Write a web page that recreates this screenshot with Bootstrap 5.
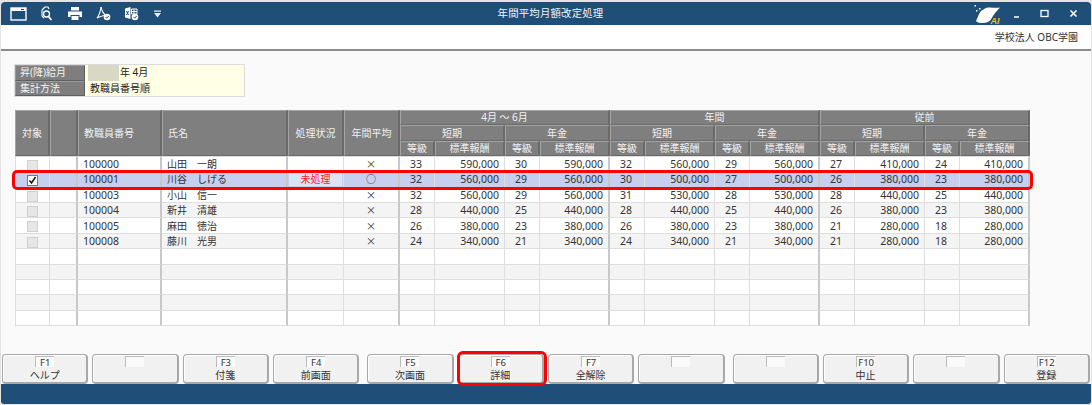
<!DOCTYPE html>
<html lang="ja">
<head>
<meta charset="utf-8">
<title>年間平均月額改定処理</title>
<link href="https://cdn.jsdelivr.net/npm/bootstrap@5.3.0/dist/css/bootstrap.min.css" rel="stylesheet">
<style>
html,body{height:405px;overflow:hidden}
body{background:#e4e4e4;font-family:"Noto Sans","Noto Sans CJK JP",sans-serif;font-size:10px;line-height:1.2;color:#333;padding:2px 1px 0 1px}
.win{height:402px;position:relative;background:#fafafa;border-radius:4px 4px 3px 3px;overflow:hidden}
.titlebar{height:23px;background:#1f4e79;color:#fff;padding-left:9px}
.tb-icons{gap:13px;width:300px}
.tb-title{font-size:10.4px;text-align:center;letter-spacing:.2px;color:#f2f4f7}
.tb-right{width:300px}
.corpbar{height:26px;background:#fff;border-bottom:2px solid #8c8c8c;padding-right:13px;color:#333;font-size:10px}
.cond{margin:13px 0 0 13px;width:231px;border:1px solid #dcdcdc;background:#ffffe6}
.cond-row{height:15.5px}
.cond-lbl{width:70px;background:#7e7e7e;color:#f4f4f4;padding-left:4px;border:1px solid #5f5f5f;border-top-color:#9a9a9a;border-left-color:#9a9a9a;line-height:13px;flex:none}
.cond-year{width:31px;background:#d8d8c4;margin-left:3px;flex:none}
.cond-val{padding-left:1px;line-height:15px;color:#222}
.cond-row+.cond-row .cond-val{padding-left:5px}
.grid-tbl{table-layout:fixed;width:1015px;margin:13px 0 0 14px;border-collapse:separate;border-spacing:0;--bs-table-bg:transparent}
.grid-tbl th{background:#7f7f7f;color:#f2f2f2;font-weight:400;height:15.4px;padding:0;text-align:center;vertical-align:middle;border:1px solid #6a6a6a;border-top-color:#a4a4a4;border-left-color:#a4a4a4;border-right-width:2px;line-height:13px;overflow:hidden}
.grid-tbl th.lft{text-align:left;padding-left:5px}
.grid-tbl td{height:15.4px;padding:0;border-right:1px solid #dedede;border-bottom:1px solid #dedede;line-height:14px;color:#333;overflow:hidden;white-space:nowrap;background:#fff;vertical-align:middle}
.grid-tbl tbody tr:first-child td{border-top:1px solid #dedede}
.grid-tbl tbody tr:nth-child(even) td{background:#f4f4f4}
.grid-tbl tbody tr.sel td{background:#c6d0ee}
.grid-tbl td:first-child{border-left:1px solid #dedede}
.grid-tbl td.v{border-right:2px solid #c8c8c8}
.c-ct{text-align:center}
.c-l{padding-left:5px!important}
.c-g{padding-left:10px!important}
.c-r{text-align:right;padding-right:5px!important}
.num{font-size:10.5px}
.mk{font-family:"Noto Sans CJK JP",sans-serif;font-size:10px;color:#444}
.chk{display:inline-block;width:11px;height:11px;background:#e6e6e6;border:1px solid #d0d0d0;vertical-align:middle}
.chk-on{background:#fff;border-color:#777}
.chk-on svg{display:block}
.st-red{display:block;margin:0 1px;background:#dde2f5;color:#ff1a1a;text-align:center}
.w1{width:35px}.w2{width:28px}.w3{width:84px}.w4{width:126px}.w5{width:56px}.w6{width:35px}.w7{width:70px}
.ftr-keys{position:absolute;left:1px;right:1px;top:352px;height:30px;gap:4px}
.fk{flex:1 1 0;height:30px;background:#f1f1f1;border:1px solid #a8a8a8;border-right-width:2px;border-bottom-width:2px;border-radius:4px;padding:0;color:#333;font-size:10px;line-height:1;box-shadow:inset 1px 1px 0 #fff}
.fk-gap{margin-left:4px}
.fk-no{display:block;width:19px;height:11px;margin-top:1px;font-size:9.5px;line-height:11px;border-top:1px solid #bbb;border-left:1px solid #bbb;background:#fafafa;flex:none}
.fk-lbl{display:block;margin-top:2px;line-height:12px}
.bluefoot{position:absolute;left:0;right:0;top:382px;height:20px;background:#1f4e79}
.mark-a{position:absolute;left:11px;top:168px;width:1021px;height:20px;border:3px solid #f00;border-radius:5px;pointer-events:none}
.mark-b{position:absolute;left:456px;top:349px;width:90px;height:35px;border:3px solid #f00;border-radius:6px;pointer-events:none}
.ic-max{margin-left:19px}
.ic-min{margin-left:11px}
.ic-close{margin-left:20px;margin-right:13px}
</style>
</head>
<body>
<div class="win">
  <div class="titlebar d-flex align-items-center">
    <div class="tb-icons d-flex align-items-center">
      <svg width="17" height="14" viewBox="0 0 17 14"><rect x="1" y="1" width="15" height="12" fill="none" stroke="#fff" stroke-width="1.400"/><rect x="1" y="1" width="15" height="3" fill="#fff"/><path d="M11 2.500h3" stroke="#1f4e79"/></svg>
      <svg width="14" height="15" viewBox="0 0 14 15" fill="none" stroke="#fff"><path d="M5 1h3l1 2M2 4v6l2 2M2 4l3-3" stroke-width="1.100"/><circle cx="6.500" cy="8" r="3" stroke-width="1.300"/><path d="M8.500 10.500l3 3.500" stroke-width="1.700"/></svg>
      <svg width="16" height="15" viewBox="0 0 16 15"><path d="M4 1h8v3.500H4z" fill="#fff"/><path d="M1 5.500h14V11h-2.500V9h-9v2H1z" fill="#fff"/><path d="M4.500 10h7v4h-7z" fill="#fff"/></svg>
      <svg width="15" height="15" viewBox="0 0 15 15" fill="none"><path d="M5 1c-.5 4-1.500 8-4 11 2-1 6-3 8-2.500" stroke="#fff" stroke-width="1.100"/><path d="M5 1c.5 3 2 6 4 8" stroke="#fff" stroke-width="1.100"/><circle cx="11" cy="11" r="3.300" fill="#fff"/><path d="M9.500 11l1.200 1.200 2-2.200" stroke="#1f4e79" fill="none"/></svg>
      <svg width="15" height="15" viewBox="0 0 15 15"><path d="M1 2.500 6.500 1v12L1 11.500z" fill="#fff"/><path d="M2.500 5l2 4M4.500 5l-2 4" stroke="#1f4e79" fill="none"/><path d="M7.500 3H13v5H7.500zM10 3v5M7.500 5.500H13" fill="none" stroke="#fff"/><circle cx="11" cy="11" r="3.300" fill="#fff"/><path d="M9.500 11l1.200 1.200 2-2.200" stroke="#1f4e79" fill="none"/></svg>
      <svg width="10" height="8" viewBox="0 0 10 8"><path d="M2 .5h7v1.300H2zM2 3h7L5.500 7.500z" fill="#e8edf2"/></svg>
    </div>
    <div class="tb-title flex-grow-1">年間平均月額改定処理</div>
    <div class="tb-right d-flex align-items-center justify-content-end">
      <svg width="29" height="20" viewBox="0 0 29 20"><path d="M27 3.500C23 4.500 19 3 15 3.500 12 4 10 5.500 8 7 6 9 5 13 3 17c1 1.800 4 2 7 2 3 0 6-1 7.500-3 2-3 3-5 5-7.500 1.500-1.800 3-3.500 4.500-5z" fill="#fff"/><path d="M1.500 1h1.500v1.500H1.500zM3 6h1.500v1.500H3zM6 4h1.500v1.500H6z" fill="#fff"/><text x="17.500" y="19.500" font-size="9" font-weight="700" font-style="italic" fill="#f0c020" font-family="Liberation Sans, sans-serif">AI</text></svg>
      <svg class="ic-min" width="8" height="10" viewBox="0 0 8 10"><path d="M1 8h5" stroke="#fff" stroke-width="1.500"/></svg>
      <svg class="ic-max" width="9" height="9" viewBox="0 0 9 9"><rect x="1" y="1.500" width="7" height="6" fill="none" stroke="#fff" stroke-width="1.300"/></svg>
      <svg class="ic-close" width="9" height="9" viewBox="0 0 9 9"><path d="M1.500 1.500l6 6M7.500 1.500l-6 6" stroke="#fff" stroke-width="1.600"/></svg>
    </div>
  </div>
  <div class="corpbar d-flex align-items-center justify-content-end">学校法人 OBC学園</div>
  <div class="cond">
    <div class="cond-row d-flex"><div class="cond-lbl">昇(降)給月</div><div class="cond-year"></div><div class="cond-val">年 4月</div></div>
    <div class="cond-row d-flex"><div class="cond-lbl">集計方法</div><div class="cond-val">教職員番号順</div></div>
  </div>
  <table class="table grid-tbl mb-0">
    <colgroup><col class="w1"><col class="w2"><col class="w3"><col class="w4"><col class="w5"><col class="w5">
    <col class="w6"><col class="w7"><col class="w6"><col class="w7"><col class="w6"><col class="w7"><col class="w6"><col class="w7"><col class="w6"><col class="w7"><col class="w6"><col class="w7"></colgroup>
    <thead>
      <tr><th rowspan="3">対象</th><th rowspan="3"></th><th rowspan="3" class="lft">教職員番号</th><th rowspan="3" class="lft">氏名</th><th rowspan="3">処理状況</th><th rowspan="3">年間平均</th><th colspan="4">4月 ～ 6月</th><th colspan="4">年間</th><th colspan="4">従前</th></tr>
      <tr><th colspan="2">短期</th><th colspan="2">年金</th><th colspan="2">短期</th><th colspan="2">年金</th><th colspan="2">短期</th><th colspan="2">年金</th></tr>
      <tr><th>等級</th><th>標準報酬</th><th>等級</th><th>標準報酬</th><th>等級</th><th>標準報酬</th><th>等級</th><th>標準報酬</th><th>等級</th><th>標準報酬</th><th>等級</th><th>標準報酬</th></tr>
    </thead>
    <tbody id="rows"></tbody>
  </table>
  <div class="ftr-keys d-flex" id="keys"></div>
  <div class="bluefoot"></div>
  <div class="mark-a"></div>
  <div class="mark-b"></div>
</div>
<script>
var data=[
["100000","山田　一朗","","×",33,"590,000",30,"590,000",32,"560,000",29,"560,000",27,"410,000",24,"410,000"],
["100001","川谷　しげる","未処理","○",32,"560,000",29,"560,000",30,"500,000",27,"500,000",26,"380,000",23,"380,000"],
["100003","小山　信一","","×",32,"560,000",29,"560,000",31,"530,000",28,"530,000",28,"440,000",25,"440,000"],
["100004","新井　清雄","","×",28,"440,000",25,"440,000",28,"440,000",25,"440,000",26,"380,000",23,"380,000"],
["100005","麻田　徳治","","×",26,"380,000",23,"380,000",26,"380,000",23,"380,000",21,"280,000",18,"280,000"],
["100008","藤川　光男","","×",24,"340,000",21,"340,000",24,"340,000",21,"340,000",21,"280,000",18,"280,000"]];
var strong=[1,2,3,5,9,13,17];
var h="";
for(var i=0;i<11;i++){
  var d=data[i];
  if(!d){h+='<tr>';for(var j=0;j<18;j++){h+='<td'+(strong.indexOf(j)>=0?' class="v"':'')+'></td>';}h+='</tr>';continue;}
  var on=i==1;
  h+='<tr'+(on?' class="sel"':'')+'><td class="c-ct"><span class="chk'+(on?' chk-on':'')+'">'+(on?'<svg width="9" height="9" viewBox="0 0 9 9"><path d="M1.500 4.500l2 2.500 4-6" fill="none" stroke="#111" stroke-width="1.500"/></svg>':'')+'</span></td>';
  h+='<td class="v"></td><td class="c-l v num">'+d[0]+'</td><td class="c-l v">'+d[1]+'</td>';
  h+='<td>'+(d[2]?'<span class="st-red">'+d[2]+'</span>':'')+'</td><td class="c-ct v mk">'+d[3]+'</td>';
  for(var k=4;k<16;k+=2){var end=(k==6||k==10||k==14);h+='<td class="c-g num">'+d[k]+'</td><td class="c-r num'+(end?' v':'')+'">'+d[k+1]+'</td>';}
  h+='</tr>';
}
document.getElementById("rows").innerHTML=h;
var keys=[["F1","ヘルプ"],["",""],["F3","付箋"],["F4","前画面"],["F5","次画面"],["F6","詳細"],["F7","全解除"],["",""],["",""],["F10","中止"],["",""],["F12","登録"]];
document.getElementById("keys").innerHTML=keys.map(function(k,i){return '<button type="button" class="btn fk d-flex flex-column align-items-center'+(i==4||i==8?' fk-gap':'')+'"><span class="fk-no">'+k[0]+'</span><span class="fk-lbl">'+k[1]+'</span></button>'}).join("");
</script>
<script src="https://cdn.jsdelivr.net/npm/bootstrap@5.3.0/dist/js/bootstrap.bundle.min.js"></script>
</body>
</html>
